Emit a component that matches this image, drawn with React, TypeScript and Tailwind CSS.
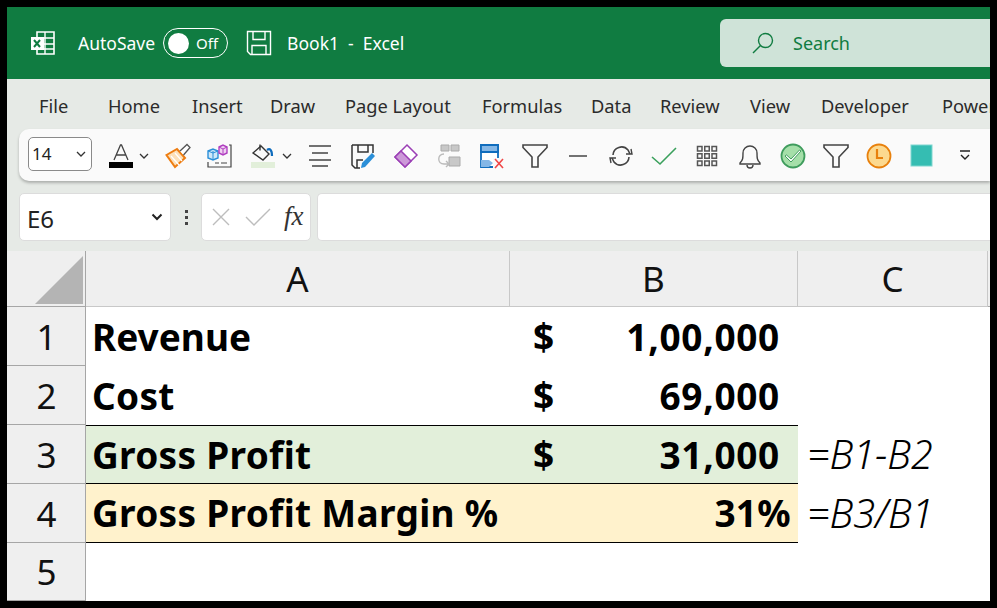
import React from 'react';

const font = { fontFamily: '"Noto Sans", "Open Sans", sans-serif' };

const tabs = [
  { label: 'File', cls: 'w-[69px]' },
  { label: 'Home', cls: 'w-[84px]' },
  { label: 'Insert', cls: 'w-[78px]' },
  { label: 'Draw', cls: 'w-[75px]' },
  { label: 'Page Layout', cls: 'w-[137px]' },
  { label: 'Formulas', cls: 'w-[109px]' },
  { label: 'Data', cls: 'w-[69px]' },
  { label: 'Review', cls: 'w-[90px]' },
  { label: 'View', cls: 'w-[71px]' },
  { label: 'Developer', cls: 'w-[121px]' },
  { label: 'Power', cls: 'w-[60px]' },
];

const Chevron = ({ className = '' }: { className?: string }) => (
  <svg width="10" height="6" viewBox="0 0 10 6" className={className}>
    <path d="M1 1l4 4 4-4" fill="none" stroke="#333" strokeWidth="1.3" />
  </svg>
);

const Icon = ({ children, w = 'w-[43px]' }: { children: React.ReactNode; w?: string }) => (
  <div className={`${w} flex shrink-0 items-center justify-center`}>
    <svg width="26" height="26" viewBox="0 0 26 26" fill="none">
      {children}
    </svg>
  </div>
);

function Toolbar() {
  return (
    <div className="ml-[12px] flex h-[52px] shrink-0 items-center overflow-hidden rounded-l-[10px] bg-[#fafafa] pl-[9px] pt-[2px] shadow-[0_2px_3px_rgba(0,0,0,0.25)]">
      <div className="mb-[4px] flex h-[34px] w-[64px] shrink-0 items-center justify-between rounded-[5px] border border-[#8a8a8a] bg-white pl-[3px] pr-[5px] text-[17px] text-[#222]">
        14
        <Chevron />
      </div>
      <div className="ml-[16px] flex w-[49px] shrink-0 items-center">
        <svg width="26" height="26" viewBox="0 0 26 26" className="shrink-0" fill="none">
          <path d="M6 17L12.5 2h1L20 17M8.5 12h9" stroke="#444" strokeWidth="1.3" />
          <rect x="1" y="19" width="24" height="6" fill="#000" />
        </svg>
        <Chevron className="ml-[5px] shrink-0" />
      </div>
      <Icon w="w-[42px]">
        <path d="M1.500 12L12 6l8 9-10 9z" fill="#fde0b8" stroke="#ee7d11" strokeWidth="2" />
        <path d="M6 13l8 9M10 10l7 8" stroke="#fff" strokeWidth="1.2" />
        <path d="M15 8l7-6.500 3 3-6.500 7.500" fill="#fff" stroke="#555" strokeWidth="1.3" />
      </Icon>
      <Icon w="w-[42px]">
        <path d="M1 8l5-2 5 2v7l-5 2-5-2z" fill="#cfe8f8" stroke="#2b8fd8" strokeWidth="1.4" />
        <path d="M6 8v9M1 8l5 2 5-2" stroke="#2b8fd8" strokeWidth="1" />
        <path d="M12 4l4-2 4 2v6l-4 2-4-2z" fill="#efd2f1" stroke="#b03fc0" strokeWidth="1.4" />
        <path d="M12 4l4 2 4-2M16 6v6" stroke="#b03fc0" strokeWidth="1" />
        <path d="M22 2h2v22H1v-5M8 20h4M14 20h6" stroke="#444" strokeWidth="1.2" />
      </Icon>
      <div className="flex w-[57px] shrink-0 items-center pl-[9px]">
        <svg width="26" height="26" viewBox="0 0 26 26" className="shrink-0" fill="none">
          <path d="M3 10l8-7 8 8-6 6z" stroke="#333" strokeWidth="1.4" />
          <path d="M10 1.500v6" stroke="#333" strokeWidth="1.4" />
          <path d="M17 7c3-2 5 0 5 6" stroke="#0f6cbd" strokeWidth="2.2" />
          <rect x="1" y="19" width="24" height="6" fill="#e2efda" />
        </svg>
        <Chevron className="ml-[6px] shrink-0" />
      </div>
      <Icon>
        <path d="M2 3h22M5 10h16M2 17h22M5 23h16" stroke="#444" strokeWidth="1.4" />
      </Icon>
      <Icon>
        <path d="M2 2h21v8M2 2v20l3 3h5M8 2v7h10V2M7 25v-8h6" stroke="#333" strokeWidth="1.5" />
        <path d="M11 25l1-5L22 10l3 3-10 11z" fill="#2b8fd8" />
      </Icon>
      <Icon>
        <path d="M14 2l10 10L12 24 2 14z" fill="#fff" stroke="#9b3fb5" strokeWidth="1.5" />
        <path d="M8 8l10 10-6 6L2 14z" fill="#cc99d8" stroke="#9b3fb5" strokeWidth="1.5" />
      </Icon>
      <Icon>
        <path d="M5 2h8v6H5zM15 2h8v6h-8z" fill="#c8c8c8" stroke="#aaa" />
        <path d="M13 14h11v9H13z" fill="#c8c8c8" stroke="#aaa" />
        <path d="M8 11c-7 0-7 10 0 10h5M10 18l3 3-3 3" stroke="#bbb" strokeWidth="1.4" />
      </Icon>
      <Icon>
        <path d="M2 2h17v22H2z" fill="#fff" stroke="#0f6cbd" strokeWidth="1.8" />
        <path d="M2 2h17v7H2z" fill="#85b7e6" stroke="#0f6cbd" strokeWidth="1.8" />
        <path d="M2 17h8l4 3-4 4H2z" fill="#85b7e6" />
        <rect x="14" y="15" width="12" height="11" fill="#fafafa" />
        <path d="M16 16l8 9M24 16l-8 9" stroke="#f04747" strokeWidth="1.6" />
      </Icon>
      <Icon>
        <path d="M1 2h24v2.500l-9 9.500v10h-6V14L1 4.500z" stroke="#444" strokeWidth="1.6" />
      </Icon>
      <Icon>
        <path d="M4 13h18" stroke="#444" strokeWidth="1.6" />
      </Icon>
      <Icon>
        <path d="M5 12a8.500 8.500 0 0 1 15-5l2 4M21 14a8.500 8.500 0 0 1-15 5l-2-4" stroke="#444" strokeWidth="1.6" />
        <path d="M18 11h6l-1-5M8 15H2l1 5" stroke="#444" strokeWidth="1.4" />
      </Icon>
      <Icon>
        <path d="M1 14l8 7L25 5" stroke="#3aa05c" strokeWidth="1.6" />
      </Icon>
      <Icon>
        {[3.5, 10.75, 18].map((y) =>
          [3.5, 10.75, 18].map((x) => (
            <rect key={`${x}-${y}`} x={x} y={y} width="4.5" height="4.5" stroke="#555" strokeWidth="1.5" />
          )),
        )}
      </Icon>
      <Icon>
        <path d="M3 20c3-3 3-5 3-10a7 7 0 0 1 14 0c0 5 0 7 3 10v1H3zM10 22a3 3 0 0 0 6 0" stroke="#444" strokeWidth="1.4" />
      </Icon>
      <Icon>
        <circle cx="13" cy="13" r="11.500" fill="#a5dfa9" stroke="#3f9c5d" strokeWidth="1.8" />
        <path d="M5 13l6 6 10-11-1.500-1-8.500 9-4.500-4z" fill="#fff" stroke="#3f9c5d" strokeWidth="1" />
      </Icon>
      <Icon>
        <path d="M1 2h24v2.500l-9 9.500v10h-6V14L1 4.500z" stroke="#444" strokeWidth="1.6" />
      </Icon>
      <Icon>
        <circle cx="13" cy="13" r="11.500" fill="#fcd98f" stroke="#e8800c" strokeWidth="1.8" />
        <path d="M11 6v9h6" stroke="#e8800c" strokeWidth="2.200" />
      </Icon>
      <Icon>
        <rect x="2" y="2" width="21" height="21" fill="#35bdb2" stroke="#7ed6cf" />
      </Icon>
      <Icon>
        <path d="M8 8h10" stroke="#222" strokeWidth="1.6" />
        <path d="M9 12l4 4 4-4" stroke="#222" strokeWidth="1.4" />
      </Icon>
    </div>
  );
}

function FormulaBar() {
  return (
    <div className="ml-[12px] mt-[12px] flex h-[48px] shrink-0 items-stretch">
      <div className="flex w-[152px] items-center justify-between rounded-[5px] border border-[#dcdcdc] bg-white pl-[7px] pr-[7px] text-[24px] text-[#222]">
        <span className="pt-[4px]">E6</span>
        <svg width="12" height="8" viewBox="0 0 12 8">
          <path d="M1.500 1.500L6 6l4.500-4.500" fill="none" stroke="#222" strokeWidth="2" />
        </svg>
      </div>
      <div className="flex w-[30px] flex-col items-center justify-center gap-[3px]">
        <span className="h-[3px] w-[3px] bg-[#444]" />
        <span className="h-[3px] w-[3px] bg-[#444]" />
        <span className="h-[3px] w-[3px] bg-[#444]" />
      </div>
      <div className="flex w-[110px] items-center rounded-[5px] border border-[#dcdcdc] bg-white pl-[9px]">
        <svg width="20" height="20" viewBox="0 0 20 20">
          <path d="M2 2l16 16M18 2L2 18" stroke="#bdbdbd" strokeWidth="1.4" />
        </svg>
        <svg width="26" height="20" viewBox="0 0 26 20" className="ml-[14px]">
          <path d="M1 10l8 8L25 2" fill="none" stroke="#bdbdbd" strokeWidth="1.4" />
        </svg>
        <span className="mb-[2px] ml-[13px] text-[27px] italic text-[#333]" style={{ fontFamily: '"Liberation Serif", serif' }}>
          fx
        </span>
      </div>
      <div className="ml-[6px] flex-1 rounded-l-[5px] border border-r-0 border-[#dcdcdc] bg-white" />
    </div>
  );
}

const rowHead = 'flex items-center justify-center border-b border-r border-[#a6a6a6] bg-[#efefef] pl-[1px] pt-[2px] text-[35px] text-[#111]';
const colHead = 'flex items-center justify-center border-b border-r border-[#c8c8c8] bg-[#efefef] pt-[1px] text-[35px] text-[#111]';
const bold = 'flex items-center text-[37px] font-bold tracking-[0.3px] text-black';
const formula = 'flex items-center pl-[9px] text-[39.5px] font-[350] italic text-black';
const amount = 'tracking-[0.7px]';

function Sheet() {
  return (
    <div className="mt-[10px] grid min-h-0 flex-1 grid-cols-[79px_424px_288px_190px_1fr] grid-rows-[56px_repeat(4,59px)_1fr] bg-white">
      <div className="flex items-end justify-end border-b border-r border-[#a6a6a6] bg-[#efefef] pb-[2px] pr-[2px]">
        <div className="h-[48px] w-[48px] bg-[#b4b4b4] [clip-path:polygon(100%_0,100%_100%,0_100%)]" />
      </div>
      <div className={colHead}>A</div>
      <div className={colHead}>B</div>
      <div className={colHead}>C</div>
      <div className="border-b border-[#a6a6a6] bg-[#efefef]" />

      <div className={rowHead}>1</div>
      <div className={`${bold} pl-[6px]`}>
        <span className="tracking-normal">Revenue</span>
      </div>
      <div className={`${bold} justify-between pl-[23px] pr-[18px]`}>
        <span>$</span>
        <span className={amount}>1,00,000</span>
      </div>
      <div />
      <div />

      <div className={rowHead}>2</div>
      <div className={`${bold} pl-[6px]`}>Cost</div>
      <div className={`${bold} justify-between pl-[23px] pr-[18px]`}>
        <span>$</span>
        <span className={amount}>69,000</span>
      </div>
      <div />
      <div />

      <div className={rowHead}>3</div>
      <div className={`${bold} border-y border-black bg-[#e2efda] pl-[6px]`}>Gross Profit</div>
      <div className={`${bold} justify-between border-y border-black bg-[#e2efda] pl-[23px] pr-[18px]`}>
        <span>$</span>
        <span className={amount}>31,000</span>
      </div>
      <div className={formula}>=B1-B2</div>
      <div />

      <div className={rowHead}>4</div>
      <div className={`${bold} border-b border-black bg-[#fff2cc] pl-[6px]`}>Gross Profit Margin %</div>
      <div className={`${bold} justify-end border-b border-black bg-[#fff2cc] pr-[7px]`}>31%</div>
      <div className={formula}>=B3/B1</div>
      <div />

      <div className={rowHead}>5</div>
      <div />
      <div />
      <div />
      <div />
    </div>
  );
}

export default function App() {
  return (
    <div className="h-[608px] w-[997px] overflow-hidden bg-black p-[7px]" style={font}>
      <div className="flex h-[594px] w-[983px] flex-col overflow-hidden bg-[#e6eae6]">
        <div className="flex h-[72px] shrink-0 items-center bg-[#107c41] text-white">
          <svg width="26" height="26" viewBox="0 0 26 26" className="ml-[23px] shrink-0" fill="none">
            <path d="M7 2h17v22H7z" stroke="#fff" strokeWidth="1.6" />
            <path d="M7 8h17M7 14h17M7 19h17M15 2v22" stroke="#fff" strokeWidth="1.4" />
            <rect x="1" y="7" width="13" height="13" fill="#fff" />
            <path d="M4 10l6 7M10 10l-6 7" stroke="#107c41" strokeWidth="2" />
          </svg>
          <span className="ml-[22px] pt-[1px] text-[17.5px]">AutoSave</span>
          <div className="ml-[8px] flex h-[30px] w-[65px] items-center rounded-full border border-white pl-[4px]">
            <span className="h-[21px] w-[21px] rounded-full bg-white" />
            <span className="ml-[7px] text-[15px]">Off</span>
          </div>
          <svg width="26" height="26" viewBox="0 0 26 26" className="ml-[18px] shrink-0" fill="none">
            <path d="M1.500 1.500h23v23H4.500l-3-3zM7 1.500v8h12v-8M6 24.500v-9h14v9" stroke="#fff" strokeWidth="1.4" />
          </svg>
          <span className="ml-[15px] whitespace-pre pt-[1px] text-[17.5px]">Book1  -  Excel</span>
          <div className="ml-auto flex h-[48px] w-[270px] items-center rounded-l-[6px] bg-[#cfe3d8] pl-[32px] text-[#107c41]">
            <svg width="22" height="22" viewBox="0 0 22 22" fill="none">
              <circle cx="13.500" cy="8.500" r="7" stroke="#107c41" strokeWidth="1.4" />
              <path d="M8.500 13.500L1 21" stroke="#107c41" strokeWidth="1.4" />
            </svg>
            <span className="ml-[19px] text-[18px]">Search</span>
          </div>
        </div>
        <div className="flex h-[50px] shrink-0 items-center whitespace-nowrap pl-[32px] pt-[4px] text-[18.3px] text-[#2b2b2b]">
          {tabs.map((t) => (
            <span key={t.label} className={`${t.cls} shrink-0`}>
              {t.label}
            </span>
          ))}
        </div>
        <Toolbar />
        <FormulaBar />
        <Sheet />
      </div>
    </div>
  );
}
